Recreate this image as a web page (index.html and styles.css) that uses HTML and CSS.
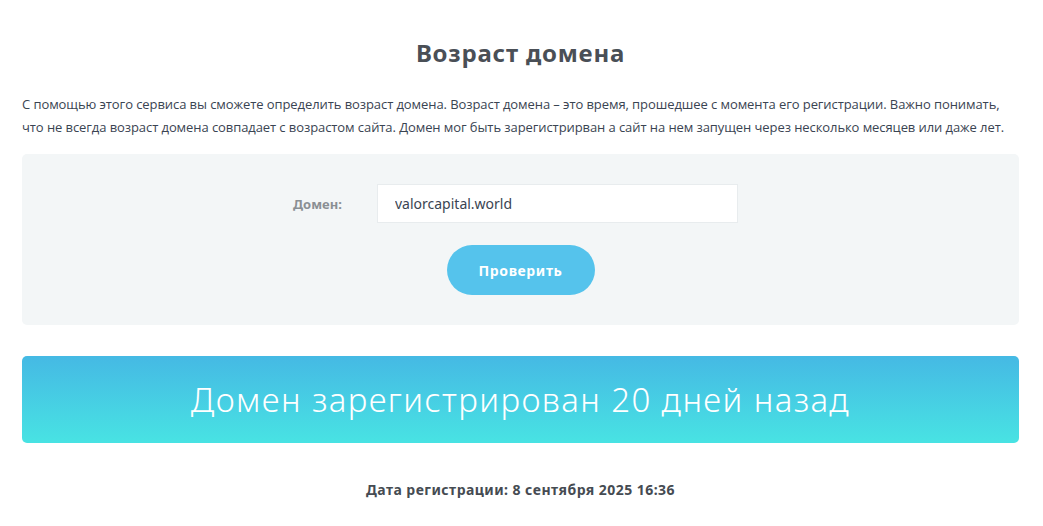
FILE: index.html
```html
<!DOCTYPE html>
<html lang="ru">
<head>
<meta charset="utf-8">
<title>Возраст домена</title>
<link rel="stylesheet" href="styles.css">
</head>
<body>
<div class="page">
  <h1 class="title">Возраст домена</h1>
  <p class="intro">С помощью этого сервиса вы сможете определить возраст домена. Возраст домена – это время, прошедшее с момента его регистрации. Важно понимать, что не всегда возраст домена совпадает с возрастом сайта. Домен мог быть зарегистрирван а сайт на нем запущен через несколько месяцев или даже лет.</p>
  <form class="panel">
    <div class="row">
      <label class="label" for="domain">Домен:</label>
      <input class="input" id="domain" type="text" value="valorcapital.world">
    </div>
    <button class="btn" type="button">Проверить</button>
  </form>
  <div class="result">Домен зарегистрирован 20 дней назад</div>
  <div class="date">Дата регистрации: 8 сентября 2025 16:36</div>
</div>
</body>
</html>
```
FILE: styles.css
```css
* { box-sizing: border-box; }
html, body { margin: 0; padding: 0; background: #fff; }
body { font-family: "Noto Sans", "Open Sans", sans-serif; color: #3c4450; }
.page { padding: 0 24px 0 22px; }
.title {
  margin: 0;
  padding-top: 36px;
  height: 93px;
  text-align: center;
  font-size: 24px;
  font-weight: 700;
  letter-spacing: 0.8px;
  color: #4a4f56;
  line-height: 34px;
}
.intro {
  margin: 0;
  font-family: "Open Sans", sans-serif;
  font-size: 13px;
  line-height: 23px;
  letter-spacing: -0.08px;
  color: #3a4452;
  height: 61px;
}
.panel {
  background: #f3f6f7;
  border-radius: 5px;
  height: 171px;
  padding-top: 30px;
  display: flex;
  flex-direction: column;
  align-items: center;
}
.row { display: flex; align-items: center; margin-right: 10px; }
.label {
  width: 84px;
  font-size: 13px;
  font-weight: 700;
  color: #8a8f94;
}
.input {
  width: 361px;
  height: 39px;
  border: 1px solid #e8ecee;
  background: #fff;
  padding: 0 17px;
  font-family: "Noto Sans", sans-serif;
  font-size: 14px;
  color: #3a4452;
  outline: none;
}
.btn {
  margin-top: 22px;
  width: 148px;
  height: 50px;
  border: none;
  border-radius: 25px;
  background: #55c3ec;
  color: #fff;
  font-family: "Noto Sans", sans-serif;
  font-size: 14px;
  font-weight: 700;
  letter-spacing: 0.6px;
}
.result {
  margin-top: 31px;
  height: 87px;
  border-radius: 5px;
  background: linear-gradient(to bottom, #45b9e4, #48e3e3);
  color: #fff;
  font-size: 33px;
  font-weight: 300;
  letter-spacing: 1.4px;
  display: flex;
  align-items: center;
  justify-content: center;
}
.date {
  margin-top: 37px;
  text-align: center;
  font-size: 14px;
  font-weight: 700;
  letter-spacing: 0.45px;
  color: #454b52;
}
```
